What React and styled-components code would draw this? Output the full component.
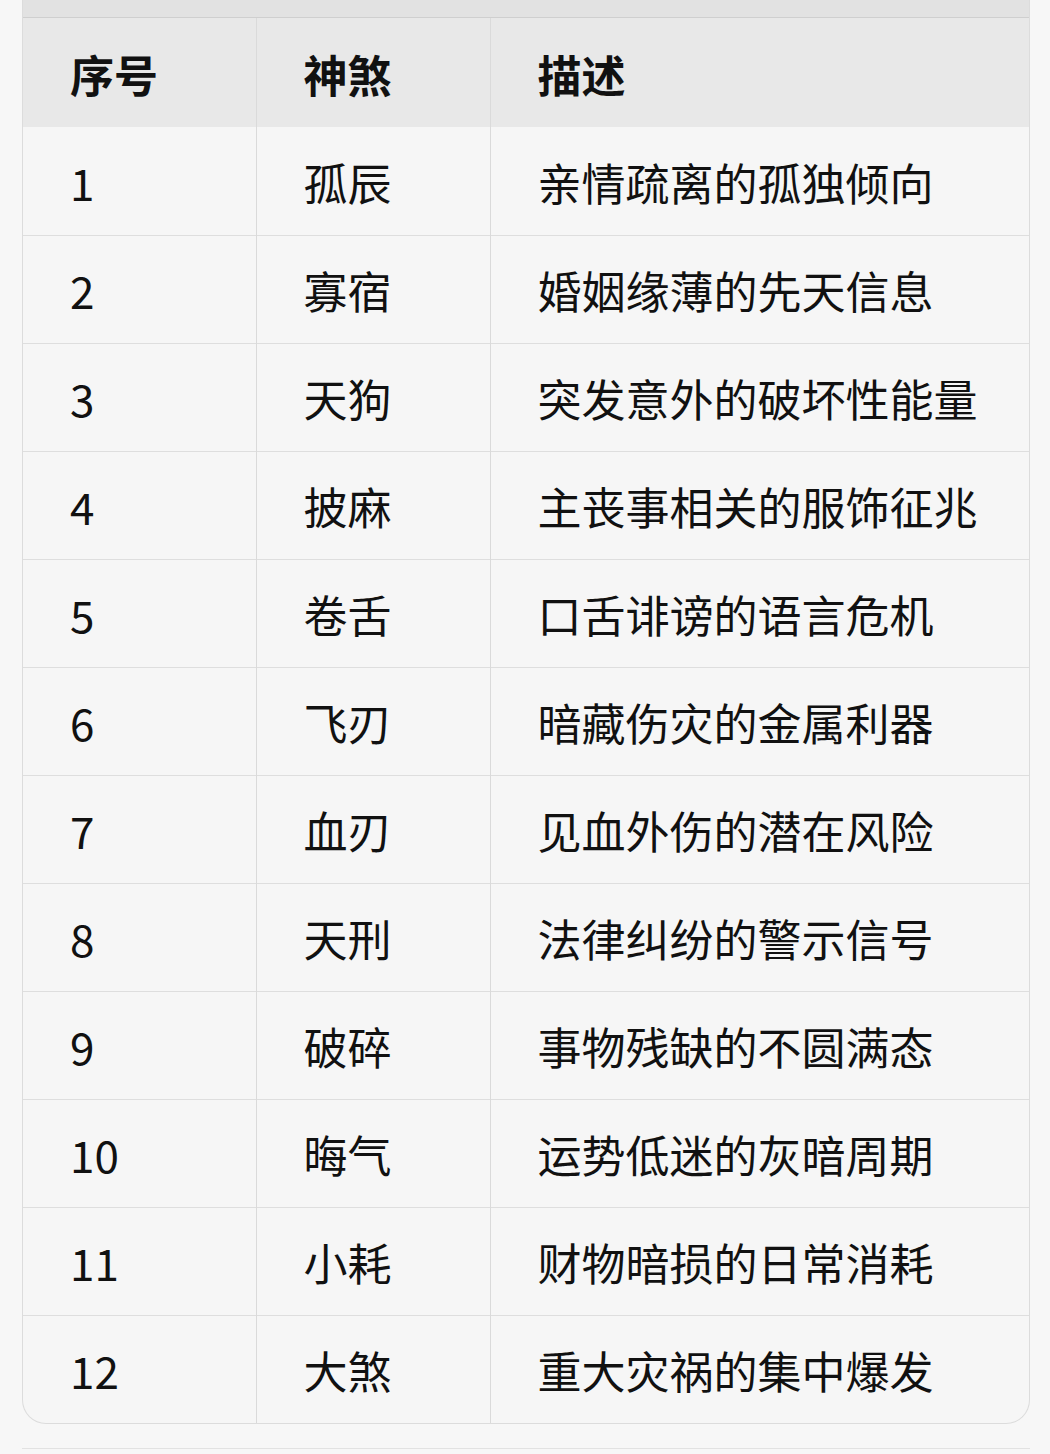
import React from 'react';
import styled, { createGlobalStyle } from 'styled-components';

const GlobalStyle = createGlobalStyle`
  html, body {
    margin: 0;
    padding: 0;
    background: #f7f7f7;
  }
  body {
    font-family: "Noto Sans CJK SC", "Noto Sans", sans-serif;
    color: #111;
  }
`;

const Page = styled.div`
  width: 1050px;
  min-height: 1454px;
  padding: 0 22px;
  box-sizing: border-box;
  display: flex;
  flex-direction: column;
`;

const Card = styled.div`
  width: 1006px;
  border: 1px solid #dcdcdc;
  border-top: none;
  border-radius: 0 0 24px 24px;
  overflow: hidden;
  background: #f6f6f6;
`;

const TopStrip = styled.div`
  height: 17px;
  background: #e2e2e2;
  border-bottom: 1px solid #cfcfcf;
`;

const Table = styled.table`
  width: 100%;
  border-collapse: collapse;
  table-layout: fixed;
`;

const HeadCell = styled.th`
  height: 109px;
  box-sizing: border-box;
  background: #e8e8e8;
  font-size: 44px;
  font-weight: 700;
  text-align: left;
  padding: 2px 0 0 ${(p) => p.$pad}px;
  border-left: 1px solid #dadada;
  &:first-child {
    border-left: none;
  }
`;

const Row = styled.tr`
  border-top: 1px solid #dedede;
  &:first-child {
    border-top: none;
  }
`;

const Cell = styled.td`
  height: 108px;
  box-sizing: border-box;
  font-size: 44px;
  font-weight: 400;
  padding: 2px 0 0 ${(p) => p.$pad}px;
  border-left: 1px solid #dadada;
  white-space: nowrap;
  &:first-child {
    border-left: none;
  }
`;

const BottomRule = styled.div`
  width: 1008px;
  height: 1px;
  margin-top: 24px;
  background: #e2e2e2;
`;

const rows = [
  ['1', '孤辰', '亲情疏离的孤独倾向'],
  ['2', '寡宿', '婚姻缘薄的先天信息'],
  ['3', '天狗', '突发意外的破坏性能量'],
  ['4', '披麻', '主丧事相关的服饰征兆'],
  ['5', '卷舌', '口舌诽谤的语言危机'],
  ['6', '飞刃', '暗藏伤灾的金属利器'],
  ['7', '血刃', '见血外伤的潜在风险'],
  ['8', '天刑', '法律纠纷的警示信号'],
  ['9', '破碎', '事物残缺的不圆满态'],
  ['10', '晦气', '运势低迷的灰暗周期'],
  ['11', '小耗', '财物暗损的日常消耗'],
  ['12', '大煞', '重大灾祸的集中爆发'],
];

export default function App() {
  return (
    <Page>
      <GlobalStyle />
      <Card>
        <TopStrip />
        <Table>
          <colgroup>
            <col style={{ width: 233 }} />
            <col style={{ width: 234 }} />
            <col />
          </colgroup>
          <thead>
            <tr>
              <HeadCell $pad={47}>序号</HeadCell>
              <HeadCell $pad={47}>神煞</HeadCell>
              <HeadCell $pad={47}>描述</HeadCell>
            </tr>
          </thead>
          <tbody>
            {rows.map((r) => (
              <Row key={r[0]}>
                <Cell $pad={47}>{r[0]}</Cell>
                <Cell $pad={47}>{r[1]}</Cell>
                <Cell $pad={47}>{r[2]}</Cell>
              </Row>
            ))}
          </tbody>
        </Table>
      </Card>
      <BottomRule />
    </Page>
  );
}
